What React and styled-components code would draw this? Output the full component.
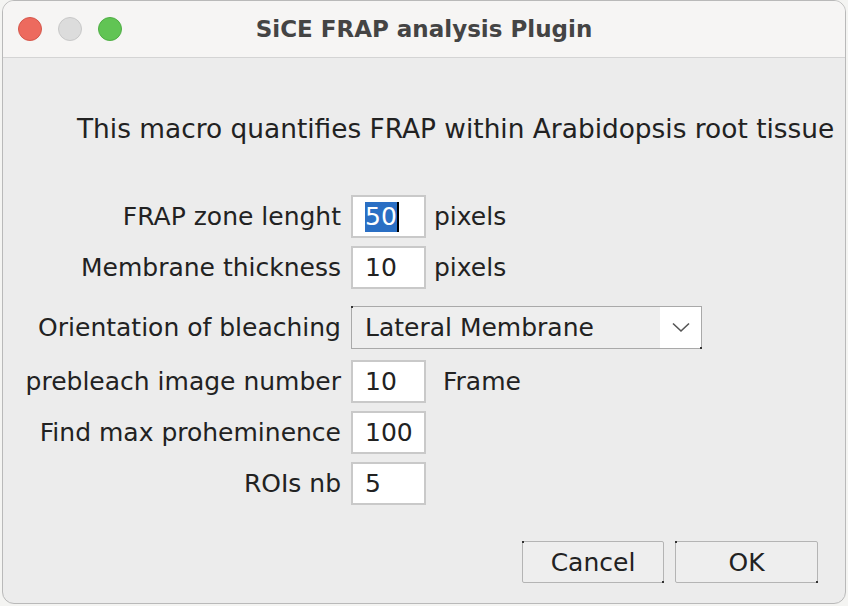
import styled, { createGlobalStyle } from 'styled-components'

const GlobalStyle = createGlobalStyle`
  html, body {
    margin: 0;
    padding: 0;
    background: #f4f4f2;
  }
  body {
    font-family: "DejaVu Sans", "Liberation Sans", sans-serif;
    color: #222;
  }
`

const Window = styled.div`
  margin-left: 2px;
  width: 844px;
  height: 604px;
  box-sizing: border-box;
  border: 1px solid #b9b9b9;
  border-radius: 12px;
  overflow: hidden;
  background: #ececec;
  display: flex;
  flex-direction: column;
`

const TitleBar = styled.div`
  height: 56px;
  flex-shrink: 0;
  background: #f6f5f4;
  border-bottom: 1px solid #d4d4d4;
  position: relative;
  display: flex;
  align-items: center;
  justify-content: center;
`

const Lights = styled.div`
  position: absolute;
  left: 15px;
  top: 16px;
  display: flex;
  gap: 16px;
`

const Light = styled.span`
  width: 24px;
  height: 24px;
  border-radius: 50%;
  box-sizing: border-box;
  background: ${p => p.color};
  border: 1px solid ${p => p.edge};
`

const Title = styled.div`
  font-size: 23px;
  font-weight: bold;
  color: #444;
`

const Body = styled.div`
  flex: 1;
  display: flex;
  flex-direction: column;
`

const Intro = styled.p`
  margin: 56px 0 0 74px;
  font-size: 26.4px;
  line-height: 30px;
  white-space: nowrap;
`

const Form = styled.div`
  margin-top: 51px;
  display: flex;
  flex-direction: column;
`

const Row = styled.div`
  display: grid;
  grid-template-columns: 340px auto auto;
  column-gap: 8px;
  align-items: center;
  justify-content: start;
  margin-top: ${p => p.top || 8}px;
  &:first-child {
    margin-top: 0;
  }
`

const Label = styled.label`
  text-align: right;
  padding-right: 2px;
  font-size: 25px;
  white-space: nowrap;
`

const Field = styled.div`
  width: 75px;
  height: 43px;
  box-sizing: border-box;
  border: 2px solid #c9c9c9;
  background: #fff;
  display: flex;
  align-items: center;
  padding-left: 12px;
  font-size: 25px;
`

const Selected = styled.span`
  background: #2a6fc4;
  color: #fff;
  border-right: 2px solid #000;
  line-height: 30px;
`

const Unit = styled.span`
  font-size: 25px;
  margin-left: ${p => p.gap || 0}px;
`

const Select = styled.div`
  width: 351px;
  height: 43px;
  box-sizing: border-box;
  border: 1px solid #a9a9a9;
  background: #eeeeee;
  display: flex;
  align-items: stretch;
  position: relative;
  font-size: 25px;
  &::before, &::after {
    content: '';
    position: absolute;
    width: 2px;
    height: 2px;
    background: #333;
  }
  &::before { left: -1px; top: -1px; }
  &::after { right: -1px; bottom: -1px; }
`

const SelectText = styled.span`
  flex: 1;
  display: flex;
  align-items: center;
  padding-left: 13px;
`

const Arrow = styled.span`
  width: 41px;
  background: #fff;
  display: flex;
  align-items: center;
  justify-content: center;
`

const Footer = styled.div`
  margin-top: auto;
  margin-bottom: 20px;
  margin-right: 27px;
  display: flex;
  justify-content: flex-end;
  gap: 11px;
`

const Button = styled.button`
  width: ${p => p.w}px;
  height: 42px;
  box-sizing: border-box;
  border: 1px solid #b4b4b4;
  border-radius: 2px;
  background: #eeeeee;
  font-family: inherit;
  font-size: 25px;
  color: #222;
  padding: 0;
  position: relative;
  &::before, &::after {
    content: '';
    position: absolute;
    width: 2px;
    height: 2px;
    background: #333;
  }
  &::before { left: -1px; top: -1px; }
  &::after { right: -1px; bottom: -1px; }
`

const fields = [
  { label: 'prebleach image number', value: '10', unit: 'Frame', gap: 9, top: 11 },
  { label: 'Find max proheminence', value: '100' },
  { label: 'ROIs nb', value: '5' },
]

export default function App() {
  return (
    <>
      <GlobalStyle />
      <Window>
        <TitleBar>
          <Lights>
            <Light color="#ed6a5e" edge="#d5574b" />
            <Light color="#dcdcdc" edge="#c8c8c8" />
            <Light color="#61c454" edge="#4fae44" />
          </Lights>
          <Title>SiCE FRAP analysis Plugin</Title>
        </TitleBar>
        <Body>
          <Intro>This macro quantifies FRAP within Arabidopsis root tissue</Intro>
          <Form>
            <Row>
              <Label>FRAP zone lenght</Label>
              <Field><Selected>50</Selected></Field>
              <Unit>pixels</Unit>
            </Row>
            <Row>
              <Label>Membrane thickness</Label>
              <Field>10</Field>
              <Unit>pixels</Unit>
            </Row>
            <Row top={17}>
              <Label>Orientation of bleaching</Label>
              <Select>
                <SelectText>Lateral Membrane</SelectText>
                <Arrow>
                  <svg width="18" height="11" viewBox="0 0 18 11">
                    <path d="M1 1.5 L9 9 L17 1.5" fill="none" stroke="#555" strokeWidth="1.6" />
                  </svg>
                </Arrow>
              </Select>
            </Row>
            {fields.map((f, i) => (
              <Row key={i} top={f.top}>
                <Label>{f.label}</Label>
                <Field>{f.value}</Field>
                {f.unit ? <Unit gap={f.gap}>{f.unit}</Unit> : <span />}
              </Row>
            ))}
          </Form>
          <Footer>
            <Button w={142}>Cancel</Button>
            <Button w={143}>OK</Button>
          </Footer>
        </Body>
      </Window>
    </>
  )
}
